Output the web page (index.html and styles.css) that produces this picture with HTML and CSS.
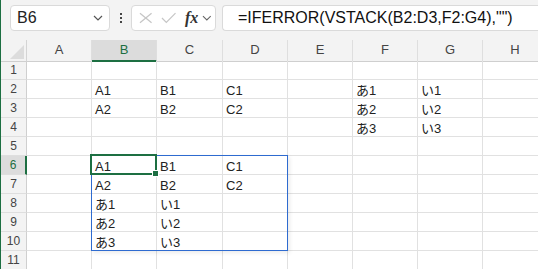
FILE: index.html
```html
<!DOCTYPE html>
<html lang="ja">
<head>
  <meta charset="UTF-8" />
  <title>VSTACK</title>
  <link rel="stylesheet" href="styles.css">
</head>
<body>
  <div class="toolbar">
    <div class="name-box">
      <span>B6</span>
      <svg class="chev" width="10" height="6" viewBox="0 0 10 6"><path d="M1 1 L5 5 L9 1" fill="none" stroke="#555" stroke-width="1.2"/></svg>
    </div>
    <div class="dots"><i></i><i></i><i></i></div>
    <div class="fx-box">
      <svg width="14" height="12" viewBox="0 0 14 12"><path d="M1 1 L13 11 M13 1 L1 11" fill="none" stroke="#c6c6c6" stroke-width="1.3"/></svg>
      <svg width="16" height="12" viewBox="0 0 16 12"><path d="M1 6 L5.5 10.5 L15 1" fill="none" stroke="#c6c6c6" stroke-width="1.3"/></svg>
      <span class="fx">fx</span>
      <svg class="chev" width="10" height="6" viewBox="0 0 10 6"><path d="M1 1 L5 5 L9 1" fill="none" stroke="#666" stroke-width="1.1"/></svg>
    </div>
    <div class="formula">=IFERROR(VSTACK(B2:D3,F2:G4),"")</div>
  </div>

  <div class="sheet">
    <div class="row head">
      <div class="corner"><span></span></div>
      <div class="col">A</div>
      <div class="col sel">B</div>
      <div class="col">C</div>
      <div class="col">D</div>
      <div class="col">E</div>
      <div class="col">F</div>
      <div class="col">G</div>
      <div class="col">H</div>
    </div>
    <div class="row">
      <div class="num">1</div>
      <div class="cell"></div><div class="cell"></div><div class="cell"></div><div class="cell"></div>
      <div class="cell"></div><div class="cell"></div><div class="cell"></div><div class="cell"></div>
    </div>
    <div class="row">
      <div class="num">2</div>
      <div class="cell"></div><div class="cell">A1</div><div class="cell">B1</div><div class="cell">C1</div>
      <div class="cell"></div><div class="cell">あ1</div><div class="cell">い1</div><div class="cell"></div>
    </div>
    <div class="row">
      <div class="num">3</div>
      <div class="cell"></div><div class="cell">A2</div><div class="cell">B2</div><div class="cell">C2</div>
      <div class="cell"></div><div class="cell">あ2</div><div class="cell">い2</div><div class="cell"></div>
    </div>
    <div class="row">
      <div class="num">4</div>
      <div class="cell"></div><div class="cell"></div><div class="cell"></div><div class="cell"></div>
      <div class="cell"></div><div class="cell">あ3</div><div class="cell">い3</div><div class="cell"></div>
    </div>
    <div class="row">
      <div class="num">5</div>
      <div class="cell"></div><div class="cell"></div><div class="cell"></div><div class="cell"></div>
      <div class="cell"></div><div class="cell"></div><div class="cell"></div><div class="cell"></div>
    </div>
    <div class="row">
      <div class="num sel">6</div>
      <div class="cell"></div><div class="cell">A1</div><div class="cell">B1</div><div class="cell">C1</div>
      <div class="cell"></div><div class="cell"></div><div class="cell"></div><div class="cell"></div>
    </div>
    <div class="row">
      <div class="num">7</div>
      <div class="cell"></div><div class="cell">A2</div><div class="cell">B2</div><div class="cell">C2</div>
      <div class="cell"></div><div class="cell"></div><div class="cell"></div><div class="cell"></div>
    </div>
    <div class="row">
      <div class="num">8</div>
      <div class="cell"></div><div class="cell">あ1</div><div class="cell">い1</div><div class="cell"></div>
      <div class="cell"></div><div class="cell"></div><div class="cell"></div><div class="cell"></div>
    </div>
    <div class="row">
      <div class="num">9</div>
      <div class="cell"></div><div class="cell">あ2</div><div class="cell">い2</div><div class="cell"></div>
      <div class="cell"></div><div class="cell"></div><div class="cell"></div><div class="cell"></div>
    </div>
    <div class="row">
      <div class="num">10</div>
      <div class="cell"></div><div class="cell">あ3</div><div class="cell">い3</div><div class="cell"></div>
      <div class="cell"></div><div class="cell"></div><div class="cell"></div><div class="cell"></div>
    </div>
    <div class="row">
      <div class="num">11</div>
      <div class="cell"></div><div class="cell"></div><div class="cell"></div><div class="cell"></div>
      <div class="cell"></div><div class="cell"></div><div class="cell"></div><div class="cell"></div>
    </div>

    <div class="spill"></div>
    <div class="active"><span class="handle"></span></div>
  </div>
</body>
</html>
```

FILE: styles.css
```css
body {
  margin: 0;
  width: 538px;
  height: 269px;
  overflow: hidden;
  background: #f3f3f3;
  border-left: 1px solid #1d6f42;
  box-sizing: border-box;
  font-family: 'Liberation Sans', 'Noto Sans CJK JP', sans-serif;
  color: #222;
}

.toolbar {
  height: 40px;
  display: flex;
  align-items: flex-start;
  padding: 5px 0 0 9px;
  box-sizing: border-box;
  white-space: nowrap;
}

.name-box,
.fx-box,
.formula {
  height: 26px;
  background: #fff;
  border: 1px solid #dadada;
  border-radius: 4px;
  box-sizing: border-box;
  display: flex;
  align-items: center;
}

.name-box {
  width: 100px;
  padding: 0 6px 0 6px;
  justify-content: space-between;
  font-size: 16px;
}

.dots {
  width: 21px;
  height: 26px;
  display: flex;
  flex-direction: column;
  align-items: center;
  justify-content: center;
  gap: 2px;
}

.dots i {
  width: 2px;
  height: 2px;
  background: #444;
  display: block;
}

.fx-box {
  width: 85px;
  padding: 0 3px 0 7px;
  gap: 8px;
}

.fx-box .fx {
  font-family: 'Liberation Serif', 'DejaVu Serif', serif;
  font-style: italic;
  font-weight: bold;
  font-size: 16px;
  color: #333;
  margin-left: 1px;
  margin-right: -4px;
}

.formula {
  margin-left: 6px;
  flex: 1;
  padding-left: 15px;
  font-size: 16px;
  border-right: none;
  border-radius: 4px 0 0 4px;
  color: #111;
}

.sheet {
  position: relative;
  background: #fff;
}

.row {
  display: grid;
  grid-template-columns: 26px 65px 65px 66px repeat(5, 65px);
  height: 19px;
}

.row.head {
  height: 21px;
  background: #f3f3f3;
}

.corner {
  border-right: 1px solid #d4d4d4;
  border-bottom: 1px solid #cfcfcf;
  position: relative;
}

.corner span {
  position: absolute;
  right: 2px;
  bottom: 2px;
  width: 0;
  height: 0;
  border-left: 14px solid transparent;
  border-bottom: 14px solid #dcdcdc;
}

.col {
  border-right: 1px solid #dedede;
  border-bottom: 1px solid #cfcfcf;
  text-align: center;
  font-size: 13px;
  line-height: 20px;
  color: #444;
}

.col.sel {
  background: #dcdcdc;
  color: #1d6f42;
  border-bottom: 2px solid #1d6f42;
}

.num {
  background: #f3f3f3;
  border-right: 1px solid #cfcfcf;
  border-bottom: 1px solid #dedede;
  text-align: center;
  font-size: 12px;
  line-height: 18px;
  color: #444;
}

.num.sel {
  background: #dcdcdc;
  color: #1d6f42;
  border-right: 2px solid #1d6f42;
}

.cell {
  border-right: 1px solid #e1e1e1;
  border-bottom: 1px solid #e1e1e1;
  font-size: 13px;
  line-height: 17px;
  padding: 2px 0 0 3px;
  box-sizing: border-box;
  overflow: hidden;
  white-space: nowrap;
}

.spill {
  position: absolute;
  left: 90px;
  top: 115px;
  width: 197px;
  height: 96px;
  border: 1px solid #2e6bd0;
  box-sizing: border-box;
  box-shadow: 2px 2px 4px rgba(0, 0, 0, 0.08);
}

.active {
  position: absolute;
  left: 89px;
  top: 114px;
  width: 67px;
  height: 21px;
  border: 2px solid #1d6f42;
  box-sizing: border-box;
}

.handle {
  position: absolute;
  right: -4px;
  bottom: -4px;
  width: 5px;
  height: 5px;
  background: #1d6f42;
  border: 1px solid #fff;
}
```
